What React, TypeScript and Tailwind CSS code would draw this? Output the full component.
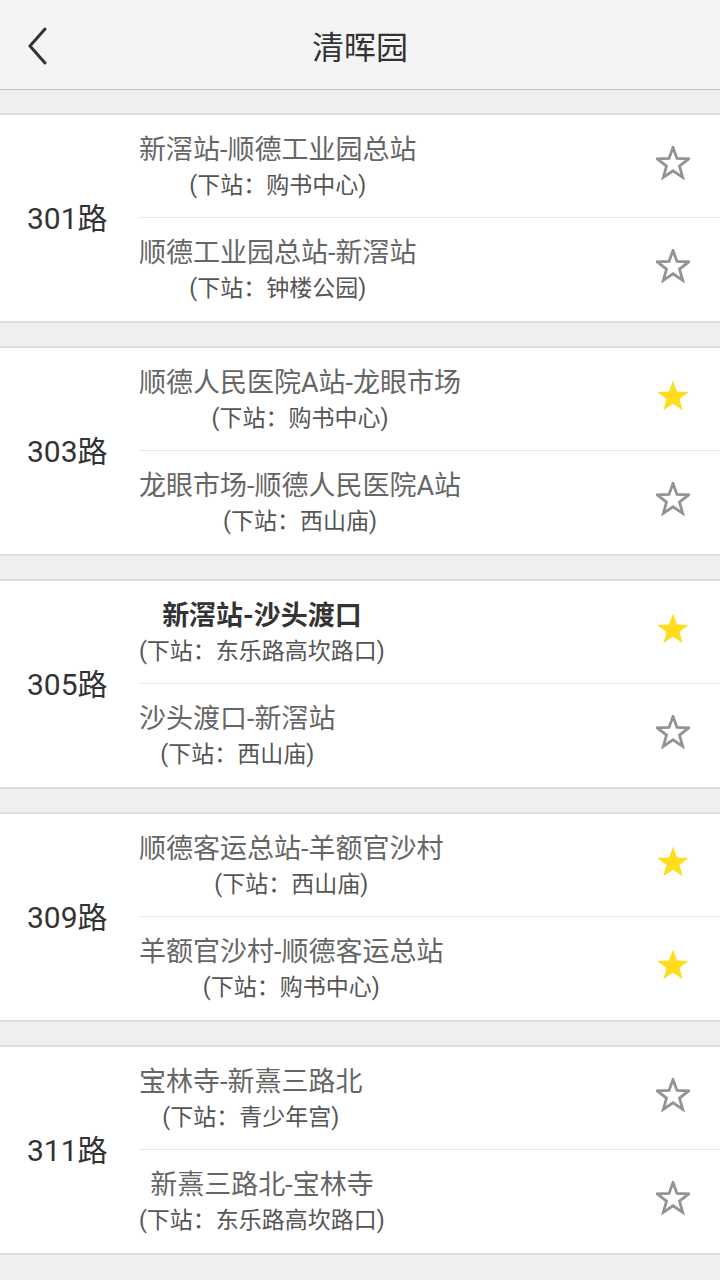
import React from "react";

type Row = { main: string; sub: string; fav: boolean; bold?: boolean };
type Route = { name: string; rows: Row[] };

const routes: Route[] = [
  {
    name: "301路",
    rows: [
      { main: "新滘站-顺德工业园总站", sub: "(下站：购书中心)", fav: false },
      { main: "顺德工业园总站-新滘站", sub: "(下站：钟楼公园)", fav: false },
    ],
  },
  {
    name: "303路",
    rows: [
      { main: "顺德人民医院A站-龙眼市场", sub: "(下站：购书中心)", fav: true },
      { main: "龙眼市场-顺德人民医院A站", sub: "(下站：西山庙)", fav: false },
    ],
  },
  {
    name: "305路",
    rows: [
      { main: "新滘站-沙头渡口", sub: "(下站：东乐路高坎路口)", fav: true, bold: true },
      { main: "沙头渡口-新滘站", sub: "(下站：西山庙)", fav: false },
    ],
  },
  {
    name: "309路",
    rows: [
      { main: "顺德客运总站-羊额官沙村", sub: "(下站：西山庙)", fav: true },
      { main: "羊额官沙村-顺德客运总站", sub: "(下站：购书中心)", fav: true },
    ],
  },
  {
    name: "311路",
    rows: [
      { main: "宝林寺-新熹三路北", sub: "(下站：青少年宫)", fav: false },
      { main: "新熹三路北-宝林寺", sub: "(下站：东乐路高坎路口)", fav: false },
    ],
  },
];

function Star({ fav }: { fav: boolean }) {
  const pts = [];
  for (let i = 0; i < 10; i++) {
    const r = i % 2 === 0 ? 16.5 : 6.8;
    const a = (Math.PI / 5) * i - Math.PI / 2;
    pts.push(`${(17 + r * Math.cos(a)).toFixed(2)},${(18 + r * Math.sin(a)).toFixed(2)}`);
  }
  return (
    <svg width="34" height="34" viewBox="0 0 34 34">
      {fav ? (
        <polygon points={pts.join(" ")} fill="#ffdc1e" />
      ) : (
        <polygon points={pts.join(" ")} fill="none" stroke="#939393" strokeWidth="2.8" strokeLinejoin="miter" />
      )}
    </svg>
  );
}

export default function App() {
  return (
    <div
      className="w-[720px] min-h-[1280px] bg-[#efefef]"
      style={{ fontFamily: 'Roboto, "Noto Sans CJK SC", sans-serif' }}
    >
      <div className="h-[90px] bg-[#f4f4f4] border-b border-[#c4c4c4] flex items-center relative">
        <svg className="absolute left-[26px] top-[27px]" width="22" height="38" viewBox="0 0 22 38">
          <polyline points="19,2 4,19 19,36" fill="none" stroke="#333333" strokeWidth="3" strokeLinecap="round" strokeLinejoin="round" />
        </svg>
        <div className="w-full text-center text-[32px] text-[#333333] leading-none pt-[6px]">清晖园</div>
      </div>
      <div className="flex flex-col gap-[23px] pt-[23px]">
        {routes.map((r) => (
          <div key={r.name} className="bg-white border-y-2 border-[#dedede] flex">
            <div className="w-[139px] shrink-0 flex items-center pl-[27px] text-[30px] text-[#333333]">
              {r.name}
            </div>
            <div className="flex-1 flex flex-col">
              {r.rows.map((row, i) => (
                <div
                  key={i}
                  className={`h-[103px] flex items-center ${i === 0 ? "border-b border-[#e6e6e6]" : ""}`}
                >
                  <div className="flex-1">
                    <div className="inline-flex flex-col items-center pt-[3px]">
                      <div
                        className={`text-[27px] leading-[36px] whitespace-nowrap ${row.bold ? "font-bold text-[#333333]" : "text-[#666666]"}`}
                      >
                        {row.main}
                      </div>
                      <div className="text-[23px] leading-[36px] whitespace-nowrap text-[#555555]">{row.sub}</div>
                    </div>
                  </div>
                  <div className="w-[92px] flex justify-center pr-[2px] mb-[7px]">
                    <Star fav={row.fav} />
                  </div>
                </div>
              ))}
            </div>
          </div>
        ))}
      </div>
    </div>
  );
}
